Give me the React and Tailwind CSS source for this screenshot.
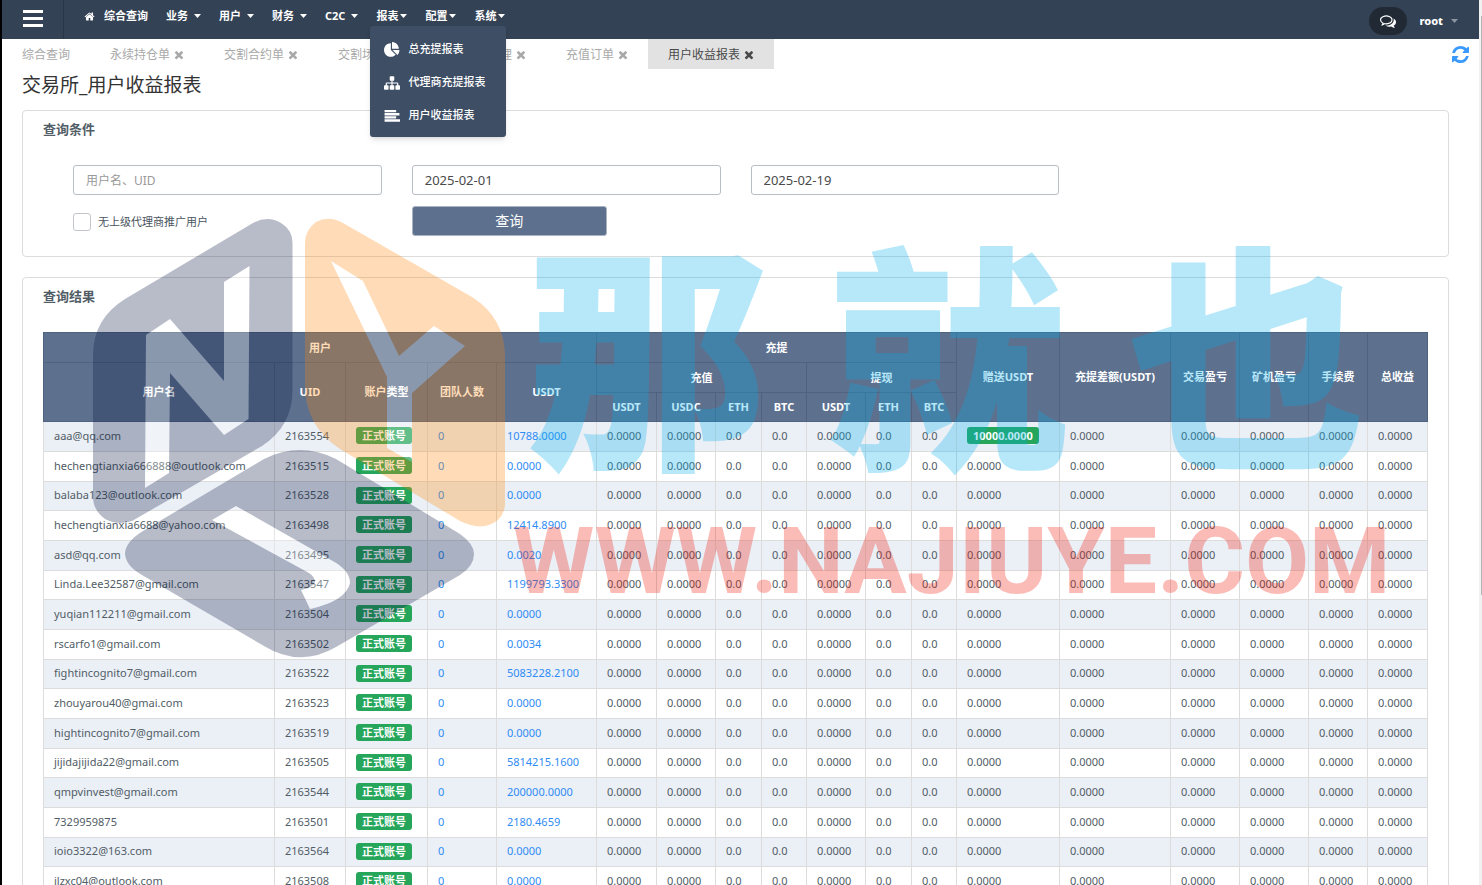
import { useState } from 'react'
import clsx from 'clsx'

//icons, all on the 1792 grid
const PATHS = {
  home: 'M1472 992v480q0 26-19 45t-45 19h-384v-384h-256v384h-384q-26 0-45-19t-19-45v-480q0-1 .5-3t.5-3l575-474 575 474q1 2 1 6zm223-69l-62 74q-8 9-21 11h-3q-13 0-21-7l-692-577-692 577q-12 8-24 7-13-2-21-11l-62-74q-8-10-7-23.5t11-21.5l719-599q32-26 76-26t76 26l244 204v-195q0-14 9-23t23-9h192q14 0 23 9t9 23v408l219 182q10 8 11 21.5t-7 23.5z',
  pie: 'M768 890l546 546q-106 108-247.5 168t-298.5 60q-209 0-385.5-103t-279.5-279.5-103-385.5 103-385.5 279.5-279.5 385.5-103v762zm187 6h773q0 157-60 298.5t-168 247.5zm709-128h-768v-768q209 0 385.5 103t279.5 279.5 103 385.5z',
  sitemap: 'M1792 1248v320q0 40-28 68t-68 28h-320q-40 0-68-28t-28-68v-320q0-40 28-68t68-28h96v-192h-512v192h96q40 0 68 28t28 68v320q0 40-28 68t-68 28h-320q-40 0-68-28t-28-68v-320q0-40 28-68t68-28h96v-192h-512v192h96q40 0 68 28t28 68v320q0 40-28 68t-68 28h-320q-40 0-68-28t-28-68v-320q0-40 28-68t68-28h96v-192q0-52 38-90t90-38h512v-192h-96q-40 0-68-28t-28-68v-320q0-40 28-68t68-28h320q40 0 68 28t28 68v320q0 40-28 68t-68 28h-96v192h512q52 0 90 38t38 90v192h96q40 0 68 28t28 68z',
  align: 'M64 220h1300v260h-1300zM64 570h1664v260h-1664zM64 920h1300v260h-1300zM64 1270h1728v260h-1728z',
  comments: 'M704 384q-153 0-286 52t-211.5 141-78.5 191q0 82 53 158t149 132l97 56-35 84q34-20 62-39l44-31 53 10q78 14 153 14 153 0 286-52t211.5-141 78.5-191-78.5-191-211.5-141-286-52zm0-128q191 0 353.5 68.5t256.5 186.5 94 257-94 257-256.5 186.5-353.5 68.5q-86 0-176-16-124 88-278 128-36 9-86 16h-3q-11 0-20.5-8t-11.5-21q-1-3-1-6.5t.5-6.5 2-6l2.5-5 3.5-5.5 4-5 4.5-5 4-4.5q5-6 23-25t26-29.5 22.5-29 25-38.5 20.5-44q-124-72-195-177t-71-224q0-139 94-257t256.5-186.5 353.5-68.5zm822 1169q10 24 20.5 44t25 38.5 22.5 29 26 29.5 23 25q1 1 4 4.5t4.5 5 4 5 3.5 5.5l2.5 5 2 6 .5 6.5-1 6.5q-3 14-13 22t-22 7q-50-7-86-16-154-40-278-128-90 16-176 16-271 0-472-132 58 4 88 4 161 0 309-45t264-129q125-92 192-212t67-254q0-77-23-152 129 71 204 178t75 230q0 120-71 224.5t-195 176.5z',
}

const Icon = ({ name, className }) => (
  <svg viewBox="0 0 1792 1792" className={className} fill="currentColor" aria-hidden="true">
    <path d={PATHS[name]} />
  </svg>
)

const Caret = ({ className }) => (
  <svg viewBox="0 0 7 4" className={clsx('h-1 w-[7px]', className)} fill="currentColor" aria-hidden="true">
    <path d="M0 0h7L3.5 4z" />
  </svg>
)

const menus = ['业务', '用户', '财务', 'C2C']
const reports = [
  { label: '总充提报表', icon: 'pie' },
  { label: '代理商充提报表', icon: 'sitemap' },
  { label: '用户收益报表', icon: 'align' },
]
const tabs = ['综合查询', '永续持仓单', '交割合约单', '交割场控单', '代理商管理', '充值订单', '用户收益报表']

const users = [
  ['aaa@qq.com', '2163554', '10788.0000', '10000.0000'],
  ['hechengtianxia666888@outlook.com', '2163515', '0.0000'],
  ['balaba123@outlook.com', '2163528', '0.0000'],
  ['hechengtianxia6688@yahoo.com', '2163498', '12414.8900'],
  ['asd@qq.com', '2163495', '0.0020'],
  ['Linda.Lee32587@gmail.com', '2163547', '1199793.3300'],
  ['yuqian112211@gmail.com', '2163504', '0.0000'],
  ['rscarfo1@gmail.com', '2163502', '0.0034'],
  ['fightincognito7@gmail.com', '2163522', '5083228.2100'],
  ['zhouyarou40@gmai.com', '2163523', '0.0000'],
  ['hightincognito7@gmail.com', '2163519', '0.0000'],
  ['jijidajijida22@gmail.com', '2163505', '5814215.1600'],
  ['qmpvinvest@gmail.com', '2163544', '200000.0000'],
  ['7329959875', '2163501', '2180.4659'],
  ['ioio3322@163.com', '2163564', '0.0000'],
  ['jlzxc04@outlook.com', '2163508', '0.0000'],
]

const Navbar = () => (
  <header className="flex h-[39px] bg-[#344255] text-white">
    <button aria-label="菜单" className="flex w-[62px] flex-col items-center justify-center gap-1 border-r border-[#2a3646] pb-[3px]">
      <span className="h-[3px] w-5 bg-white" />
      <span className="h-[3px] w-5 bg-white" />
      <span className="h-[3px] w-5 bg-white" />
    </button>
    <nav className="flex h-8 items-center gap-[18px] pl-5 text-[11px] font-bold">
      <a href="#home" className="flex items-center gap-[9px]">
        <Icon name="home" className="size-[11px]" />
        综合查询
      </a>
      {menus.map((m) => (
        <button key={m} className="flex items-center gap-1.5">{m}<Caret /></button>
      ))}
      <div className="relative flex h-8 items-center">
        <button className="flex items-center gap-0.5">报表<Caret /></button>
        <ul className="absolute top-[26px] -left-1.5 z-20 w-[136px] rounded-[3px] bg-[#3e4e65] pt-[7px] pb-[5px] shadow-md">
          {reports.map((r) => (
            <li key={r.label}>
              <a href="#report" className="flex h-[33px] items-center gap-2 pl-3.5 font-medium whitespace-nowrap">
                <Icon name={r.icon} className="size-4" />
                {r.label}
              </a>
            </li>
          ))}
        </ul>
      </div>
      <button className="flex items-center gap-0.5">配置<Caret /></button>
      <button className="flex items-center gap-0.5">系统<Caret /></button>
    </nav>
    <div className="ml-auto flex items-center gap-3 pt-[3px] pr-[21px]">
      <button aria-label="消息" className="flex h-7 w-[38px] items-center justify-center rounded-full bg-[#212934]">
        <Icon name="comments" className="size-4" />
      </button>
      <button className="flex items-center gap-2 text-[11px] font-extrabold">
        root
        <Caret className="text-[#8c95a2]" />
      </button>
    </div>
  </header>
)

const Tabs = () => (
  <div className="flex h-[30px] text-xs text-[#a9a9a9]">
    {tabs.map((t, i) => (
      <div key={t} className={clsx('flex items-center gap-1 px-5 pt-0.5', i === tabs.length - 1 && 'bg-[#e2e2e2] text-[#4a4a4a]')}>
        <a href="#tab" className="whitespace-nowrap">{t}</a>
        {i > 0 && (
          <button aria-label="关闭">
            <svg viewBox="180 220 1440 1440" className="size-2.5" fill="currentColor">
              <path d="M1490 1322q0 40-28 68l-136 136q-28 28-68 28t-68-28l-294-294-294 294q-28 28-68 28t-68-28l-136-136q-28-28-28-68t28-68l294-294-294-294q-28-28-28-68t28-68l136-136q28-28 68-28t68 28l294 294 294-294q28-28 68-28t68 28l136 136q28 28 28 68t-28 68l-294 294 294 294q28 28 28 68z" />
            </svg>
          </button>
        )}
      </div>
    ))}
    <button aria-label="刷新" className="ml-auto pr-2.5 text-[#3b99fc]">
      <svg viewBox="0 0 1536 1536" className="size-[17px]" fill="currentColor">
        <path d="M1511 928q0 5-1 7-64 268-268 434.5t-478 166.5q-146 0-282.5-55t-243.5-157l-129 129q-19 19-45 19t-45-19-19-45v-448q0-26 19-45t45-19h448q26 0 45 19t19 45-19 45l-137 137q71 66 161 102t187 36q134 0 250-65t186-179q11-17 53-117 8-23 30-23h192q13 0 22.5 9.5t9.5 22.5zm25-800v448q0 26-19 45t-45 19h-448q-26 0-45-19t-19-45 19-45l138-138q-148-137-349-137-134 0-250 65t-186 179q-11 17-53 117-8 23-30 23h-199q-13 0-22.5-9.5t-9.5-22.5v-7q65-268 270-434.5t480-166.5q146 0 284 55.5t245 156.5l130-129q19-19 45-19t45 19 19 45z" />
      </svg>
    </button>
  </div>
)

const Panel = ({ title, children }) => (
  <section className="mb-5 rounded border border-[#dcdcdc] px-5 pt-2 pb-5">
    <h2 className="mb-[26px] text-[13px] leading-5 font-bold text-[#515d66]">{title}</h2>
    {children}
  </section>
)

const inputClass = 'h-[30px] w-full rounded-[3px] border border-[#b8bec6] bg-white px-3 text-[#4a4a4a] outline-none placeholder:text-[#999]'

const SearchForm = () => {
  const [from, setFrom] = useState('2025-02-01')
  const [to, setTo] = useState('2025-02-19')

  return (
    <form className="grid grid-cols-4 gap-x-[30px] gap-y-[11px] px-[30px]" onSubmit={(e) => e.preventDefault()}>
      <input aria-label="用户名、UID" placeholder="用户名、UID" className={clsx(inputClass, 'text-xs')} />
      <input aria-label="开始日期" value={from} onChange={(e) => setFrom(e.target.value)} className={clsx(inputClass, 'text-[13px]')} />
      <input aria-label="结束日期" value={to} onChange={(e) => setTo(e.target.value)} className={clsx(inputClass, 'text-[13px]')} />
      <label className="col-start-1 flex items-center gap-[7px] pt-0.5 text-[11px] text-[#4a5560]">
        <input type="checkbox" className="size-[18px] appearance-none rounded-[3px] border border-[#c3c6ca] bg-white" />
        无上级代理商推广用户
      </label>
      <button className="h-[30px] w-[195px] rounded-[3px] border border-[#a9b3c1] bg-[#5d718f] text-sm text-white">查询</button>
    </form>
  )
}

const Th = ({ className, ...props }) => (
  <th className={clsx('border border-[#4f6380] p-0 text-center font-bold', className)} {...props} />
)
const Td = ({ className, ...props }) => (
  <td className={clsx('border border-[#dcdcdc] py-0 pr-0 pb-0.5 pl-2.5', className)} {...props} />
)

const Badge = ({ className, children }) => (
  <span className={clsx('block h-[17px] w-fit rounded-[3px] bg-[#26a65b] px-1.5 leading-[17px] font-bold text-white', className)}>{children}</span>
)

const ResultTable = () => (
  <table className="w-full table-fixed border-collapse text-[11px] leading-4 whitespace-nowrap text-[#515d66]">
    <colgroup>
      <col />
      <col className="w-[71px]" />
      <col className="w-[82px]" />
      <col className="w-[69px]" />
      <col className="w-[100px]" />
      <col className="w-[60px]" />
      <col className="w-[59px]" />
      <col className="w-[46px]" />
      <col className="w-[45px]" />
      <col className="w-[59px]" />
      <col className="w-[46px]" />
      <col className="w-[45px]" />
      <col className="w-[103px]" />
      <col className="w-[111px]" />
      <col className="w-[69px]" />
      <col className="w-[69px]" />
      <col className="w-[59px]" />
      <col className="w-[60px]" />
    </colgroup>
    <thead className="bg-[#5d718f] text-white">
      <tr className="h-[30px]">
        <Th colSpan={5}>用户</Th>
        <Th colSpan={7}>充提</Th>
        <Th rowSpan={3}>赠送USDT</Th>
        <Th rowSpan={3}>充提差额(USDT)</Th>
        <Th rowSpan={3}>交易盈亏</Th>
        <Th rowSpan={3}>矿机盈亏</Th>
        <Th rowSpan={3}>手续费</Th>
        <Th rowSpan={3}>总收益</Th>
      </tr>
      <tr className="h-[30px]">
        {['用户名', 'UID', '账户类型', '团队人数', 'USDT'].map((h) => <Th key={h} rowSpan={2}>{h}</Th>)}
        <Th colSpan={4}>充值</Th>
        <Th colSpan={3}>提现</Th>
      </tr>
      <tr className="h-[29px]">
        {['USDT', 'USDC', 'ETH', 'BTC', 'USDT', 'ETH', 'BTC'].map((h, i) => <Th key={i}>{h}</Th>)}
      </tr>
    </thead>
    <tbody>
      {users.map(([name, uid, usdt, gift]) => (
        <tr key={uid} className="h-[30px] odd:bg-[#ebeff6] nth-[3n]:h-[29px]">
          <Td>{name}</Td>
          <Td>{uid}</Td>
          <Td><Badge>正式账号</Badge></Td>
          <Td><a href="#team" className="text-[#2f8cf5]">0</a></Td>
          <Td><a href="#usdt" className="text-[#2f8cf5]">{usdt}</a></Td>
          <Td>0.0000</Td>
          <Td>0.0000</Td>
          <Td>0.0</Td>
          <Td>0.0</Td>
          <Td>0.0000</Td>
          <Td>0.0</Td>
          <Td>0.0</Td>
          <Td>{gift ? <Badge>{gift}</Badge> : '0.0000'}</Td>
          <Td>0.0000</Td>
          <Td>0.0000</Td>
          <Td>0.0000</Td>
          <Td>0.0000</Td>
          <Td>0.0000</Td>
        </tr>
      ))}
    </tbody>
  </table>
)

//site stamp that floats over the page
const Watermark = () => (
  <div className="pointer-events-none absolute inset-0 z-10 overflow-hidden opacity-[0.28]" aria-hidden="true">
    <svg viewBox="92 218 414 440" className="absolute top-[218px] left-[92px] h-[440px] w-[414px]">
      <path fill="#05133e" d="M93 355Q93 319 125 299L253 223Q268 215 281 223Q292.500 230 292.500 243V390Q292.500 426 262 446L132 521Q118 526 105 519Q93 510 93 497Z" />
      <path fill="#ff8500" d="M305 243Q305 230 316 222Q329 215 343 223L472 297Q505 318 505 357V505Q503 522 485 526Q474 528 460 521L340 449Q305 426 305 385Z" />
      <path fill="#05133e" d="M264 459L143 531Q125 542 125 554Q126 566 142 575L264 646Q300 668 336 647L460 575Q474 566 474 554Q474 544 460 534L336 459Q300 441 264 459Z" />
      <path fill="#fff" d="M146 335L170 319L224 381V282L249.500 266L248.500 419L224 435L170 373L169 473L145 488Z" />
      <path fill="#fff" d="M331 261L363 281L399 356L434 326L465 346L412 393V462L387 448V377Z" />
      <path fill="#fff" d="M236 506L331 560Q350 570 350 583Q346 601 310 609L301 590Q314 587 315 582Q315 577 309 573L212 520Z" />
    </svg>
    <div className="absolute top-[227px] left-[527px] flex gap-[60px] font-['Noto_Sans_CJK_SC',sans-serif] text-[240px] leading-[240px] font-black text-[#00b0ed]">
      <span>那</span>
      <span>就</span>
      <span>也</span>
    </div>
    <p className="absolute top-[515px] left-[513px] font-[Roboto,sans-serif] text-[93px] leading-[93px] font-bold text-[#f11200]">WWW.NAJIUYE.COM</p>
  </div>
)

const App = () => (
  <div className="relative flex h-screen overflow-hidden bg-white font-['Noto_Sans','Noto_Sans_CJK_SC',sans-serif]">
    <div className="w-0.5 shrink-0 bg-black" />
    <div className="min-w-0 flex-1">
      <Navbar />
      <Tabs />
      <main className="pr-[30px] pl-5">
        <h1 className="mb-[9px] text-[19px] leading-8 text-[#333]">交易所_用户收益报表</h1>
        <Panel title="查询条件"><SearchForm /></Panel>
        <Panel title="查询结果"><ResultTable /></Panel>
      </main>
    </div>
    <div className="w-[3px] shrink-0 bg-[#f1f1f1] pt-4 pl-0.5">
      <div className="h-2/3 bg-[#b5b5b5]" />
    </div>
    <Watermark />
  </div>
)

export default App
